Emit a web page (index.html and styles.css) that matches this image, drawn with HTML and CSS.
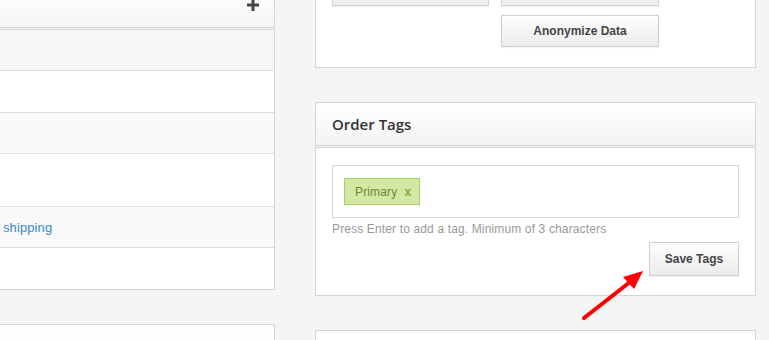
FILE: index.html
```html
<!DOCTYPE html>
<html lang="en">
        <head>
                <meta charset="UTF-8">
                <meta name="viewport" content="width=device-width, initial-scale=1.0">
                <title>Order Details</title>
                <link rel="stylesheet" href="styles.css">
        </head>
        <body>
                <div class="page">
                        <div class="col-left">
                                <div class="panel panel-top">
                                        <div class="panel-head">
                                                <svg class="plus" width="12" height="12" viewBox="0 0 12 12">
                                                        <rect x="0" y="4.5" width="12" height="3" fill="#444"/>
                                                        <rect x="4.5" y="0" width="3" height="12" fill="#444"/>
                                                </svg>
                                        </div>
                                </div>
                                <div class="panel">
                                        <div class="table-head"></div>
                                        <div class="row row-1"></div>
                                        <div class="row row-2 striped"></div>
                                        <div class="row row-3"></div>
                                        <div class="row row-4 striped"><a href="#" class="link">shipping</a></div>
                                        <div class="row row-5"></div>
                                </div>
                                <div class="panel panel-next"></div>
                        </div>

                        <div class="col-right">
                                <div class="box box-actions">
                                        <div class="actions">
                                                <!-- top row is scrolled out of view -->
                                                <button class="btn" aria-label="Edit Order"></button>
                                                <button class="btn" aria-label="Resend Receipt"></button>
                                                <button class="btn btn-second">Anonymize Data</button>
                                        </div>
                                </div>

                                <div class="box box-head">
                                        <h3>Order Tags</h3>
                                </div>
                                <div class="box box-body">
                                        <div class="tag-input">
                                                <span class="tag">Primary <b>x</b></span>
                                        </div>
                                        <p class="hint">Press Enter to add a tag. Minimum of 3 characters</p>
                                        <div class="save-row">
                                                <button class="btn btn-save">Save Tags</button>
                                        </div>
                                </div>

                                <div class="box box-next"></div>
                        </div>
                </div>

                <svg class="arrow" width="769" height="340" viewBox="0 0 769 340">
                        <line x1="584" y1="318" x2="630" y2="282" stroke="#f00" stroke-width="4" stroke-linecap="round"/>
                        <polygon points="643,271 623,277 634,289" fill="#f00"/>
                </svg>
        </body>
</html>
```

FILE: styles.css
```css
html 
{
        overflow: hidden;
}
body 
{
        font-family: "Liberation Sans", Arial, sans-serif;
        background-color: #f5f5f5;
        color: #333;
        margin: 0;
        height: 340px;
        overflow: hidden;
}
.page 
{
        display: flex;
        gap: 40px;
        margin-left: -20px;
}
.col-left 
{
        width: 295px;
        margin-top: -13px;
}
.col-right 
{
        width: 441px;
        margin-top: -43px;
}
.panel 
{
        background-color: #fff;
        border: 1px solid #d5d5d5;
}
.panel-top 
{
        margin-bottom: 1px;
        background: linear-gradient(#fff, #f4f4f4);
}
.panel-head 
{
        height: 39px;
        box-sizing: border-box;
        padding: 11px 15px 0 0;
        display: flex;
        justify-content: flex-end;
}
.plus 
{
        display: block;
}
.table-head 
{
        height: 40px;
        background-color: #f7f7f7;
        border-bottom: 1px solid #ddd;
}
.row 
{
        border-bottom: 1px solid #ddd;
        display: flex;
        align-items: center;
        padding-left: 22px;
}
.row-1 { height: 41px; }
.row-2 { height: 40px; }
.row-3 { height: 52px; }
.row-4 { height: 40px; }
.row-5 { height: 41px; border-bottom: none; }
.striped 
{
        background-color: #fafafa;
}
.link 
{
        color: #3a87c8;
        font-size: 13px;
        letter-spacing: 0.1px;
        text-decoration: none;
}
.panel-next 
{
        margin-top: 34px;
        height: 15px;
        border-bottom: none;
        background-color: #fdfdfd;
}
.box 
{
        background-color: #fff;
        border: 1px solid #d5d5d5;
}
.box-actions 
{
        padding: 16px 16px 20px;
}
.actions 
{
        display: grid;
        grid-template-columns: 157px 158px;
        grid-auto-rows: 32px;
        gap: 9px 12px;
}
.btn 
{
        font-family: "Liberation Sans", Arial, sans-serif;
        font-size: 12px;
        font-weight: bold;
        color: #444;
        background: linear-gradient(#fdfdfd, #ececec);
        border: 1px solid #d0d0d0;
        box-shadow: 0 1px 1px rgba(0, 0, 0, 0.05);
        padding: 0;
        cursor: pointer;
}
.btn-second 
{
        grid-column: 2;
}
.box-head 
{
        margin-top: 34px;
        background: linear-gradient(#fff, #f4f4f4);
}
.box-head h3 
{
        font-family: "Open Sans", sans-serif;
        font-weight: 600;
        font-size: 15px;
        color: #333;
        margin: 0;
        padding-left: 16px;
        line-height: 42px;
}
.box-body 
{
        margin-top: 1px;
        padding: 17px 16px 19px 16px;
}
.tag-input 
{
        border: 1px solid #d9d9d9;
        padding: 12px 11px;
        display: flex;
}
.tag 
{
        height: 27px;
        box-sizing: border-box;
        background-color: #d3e8a2;
        border: 1px solid #a9d25e;
        color: #6a8a30;
        font-size: 12px;
        letter-spacing: 0.15px;
        padding: 0 8px 0 10px;
        display: flex;
        align-items: center;
        gap: 7px;
}
.tag b 
{
        color: #7fa83a;
}
.hint 
{
        font-size: 12px;
        letter-spacing: 0.14px;
        color: #999;
        line-height: 16px;
        margin: 3px 0 0;
}
.save-row 
{
        display: flex;
        justify-content: flex-end;
        margin-top: 5px;
}
.btn-save 
{
        width: 90px;
        height: 34px;
}
.box-next 
{
        margin-top: 34px;
        height: 9px;
        border-bottom: none;
}
.arrow 
{
        position: absolute;
        top: 0;
        left: 0;
        pointer-events: none;
}
```
